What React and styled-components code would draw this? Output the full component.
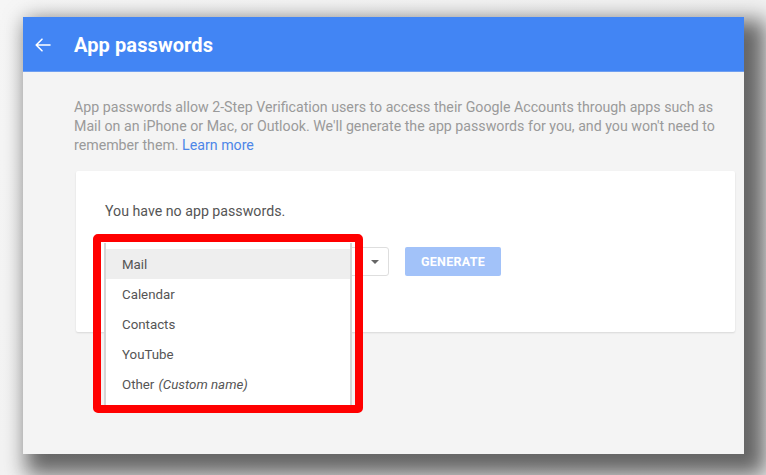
import React from "react";
import styled, { createGlobalStyle } from "styled-components";

const Global = createGlobalStyle`
  html, body { margin: 0; padding: 0; background: #f1f1f1; }
  body { font-family: Roboto, "Liberation Sans", Arial, sans-serif; }
`;

const Stage = styled.div`
  width: 766px;
  height: 475px;
  overflow: hidden;
  box-sizing: border-box;
  padding: 17px 0 0 23px;
  background: linear-gradient(135deg, #f6f6f6 0%, #eeeeee 100%);
`;

const Window = styled.div`
  width: 721px;
  height: 437px;
  background: #f4f4f4;
  box-shadow: 12px 12px 20px 9px rgba(0, 0, 0, 0.58);
  display: flex;
  flex-direction: column;
`;

const Header = styled.header`
  height: 55px;
  flex: none;
  background: #4285f4;
  border-bottom: 1px solid #6f9ff0;
  box-sizing: border-box;
  display: flex;
  align-items: center;
  padding: 2px 0 0 11px;
  gap: 22px;
`;

const Title = styled.h1`
  margin: 0;
  color: #ffffff;
  font-size: 20px;
  font-weight: 700;
  letter-spacing: 0.1px;
`;

const Content = styled.main`
  padding: 26px 9px 0 51px;
`;

const Intro = styled.p`
  margin: 0 0 16px;
  font-size: 14.2px;
  line-height: 19px;
  color: #9a9a9a;
`;

const Link = styled.a`
  color: #4d86e8;
  text-decoration: none;
`;

const Card = styled.section`
  margin-left: 2px;
  background: #ffffff;
  border-radius: 2px;
  box-shadow: 0 1px 2px rgba(0, 0, 0, 0.12);
  padding: 31px 29px 56px;
`;

const Empty = styled.div`
  font-size: 14.2px;
  line-height: 19px;
  color: #555;
`;

const Row = styled.div`
  margin-top: 26px;
  display: flex;
  align-items: center;
  gap: 16px;
`;

const SelectWrap = styled.div`
  position: relative;
`;

const Select = styled.div`
  width: 284px;
  height: 29px;
  box-sizing: border-box;
  border: 1px solid #dedede;
  border-radius: 3px;
  background: #fff;
  display: flex;
  align-items: center;
  justify-content: flex-end;
  padding-right: 9px;
  color: #666;
  font-size: 13px;
`;

const Caret = styled.span`
  width: 0;
  height: 0;
  border-left: 4px solid transparent;
  border-right: 4px solid transparent;
  border-top: 4px solid #666;
`;

const Button = styled.button`
  width: 96px;
  height: 29px;
  border: none;
  border-radius: 2px;
  background: #a2c2f9;
  color: #ffffff;
  font-family: inherit;
  font-size: 12.5px;
  font-weight: 700;
  letter-spacing: 0.3px;
  padding: 0;
`;

const Menu = styled.ul`
  position: absolute;
  left: -1px;
  top: -4px;
  width: 248px;
  margin: 0;
  padding: 6px 0 6px;
  list-style: none;
  background: #fff;
  border-left: 2px solid #d4d4d4;
  border-right: 2px solid #d4d4d4;
  border-bottom: 1px solid #dcdcdc;
  box-sizing: border-box;
  z-index: 2;
`;

const Item = styled.li`
  height: 30px;
  display: flex;
  align-items: center;
  padding-left: 16px;
  font-size: 13.3px;
  color: #555;
  background: ${(p) => (p.$active ? "#eeeeee" : "transparent")};
`;

const Hint = styled.em`
  margin-left: 4px;
  font-style: italic;
`;

const Highlight = styled.div`
  position: absolute;
  left: -12px;
  top: -13px;
  width: 270px;
  height: 179px;
  box-sizing: border-box;
  border: 8px solid #ff0000;
  border-radius: 5px;
  z-index: 3;
  pointer-events: none;
`;

const BackArrow = () => (
  <svg width="18" height="18" viewBox="0 0 18 18" fill="none">
    <path d="M16 9H2.5M8 3.2L2.2 9 8 14.8" stroke="#ffffff" strokeWidth="1.6" strokeLinecap="round" strokeLinejoin="round" />
  </svg>
);

const items = ["Mail", "Calendar", "Contacts", "YouTube"];

export default function App() {
  return (
    <>
      <Global />
      <Stage>
        <Window>
          <Header>
            <BackArrow />
            <Title>App passwords</Title>
          </Header>
          <Content>
            <Intro>
              App passwords allow 2-Step Verification users to access their Google Accounts through apps such as
              Mail on an iPhone or Mac, or Outlook. We'll generate the app passwords for you, and you won't need to
              remember them. <Link href="#">Learn more</Link>
            </Intro>
            <Card>
              <Empty>You have no app passwords.</Empty>
              <Row>
                <SelectWrap>
                  <Select>
                    <Caret />
                  </Select>
                  <Menu>
                    {items.map((it, i) => (
                      <Item key={it} $active={i === 0}>{it}</Item>
                    ))}
                    <Item>
                      Other<Hint>(Custom name)</Hint>
                    </Item>
                  </Menu>
                  <Highlight />
                </SelectWrap>
                <Button>GENERATE</Button>
              </Row>
            </Card>
          </Content>
        </Window>
      </Stage>
    </>
  );
}
